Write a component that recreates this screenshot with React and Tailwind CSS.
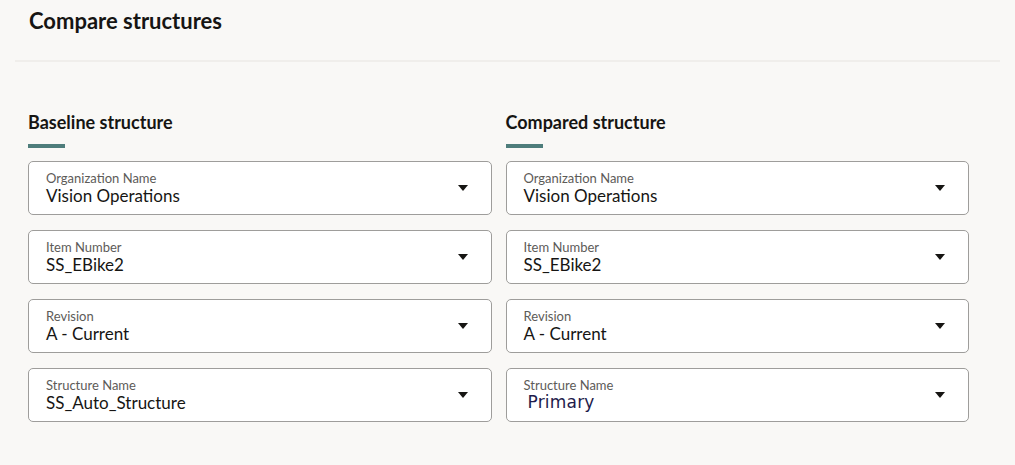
import React from 'react';

const Caret = () => (
    <svg width="10" height="6" viewBox="0 0 10 6" className="shrink-0">
        <path d="M0 0 H10 L5 6 Z" fill="#161513" />
    </svg>
);

const SelectField = ({ label, value, alt }) => (
    <div className="h-[54px] flex items-center justify-between bg-white border border-[#9e9d9b] rounded-[5px] pl-[17px] pr-[23px]">
        <div className="flex flex-col">
            <span className="text-[13px] leading-[15px] text-[#5d5b58]">{label}</span>
            {alt ? (
                <span className="text-[17px] leading-[19px] text-[#1e1b4b] pl-[4px] font-['DejaVu_Sans',sans-serif] tracking-[0.2px]">{value}</span>
            ) : (
                <span className="text-[17px] leading-[19px] text-[#161513]">{value}</span>
            )}
        </div>
        <Caret />
    </div>
);

const Column = ({ title, fields }) => (
    <div className="flex flex-col">
        <h2 className="text-[18px] leading-[22px] font-bold text-[#161513]">{title}</h2>
        <div className="w-[37px] h-[4px] bg-[#4e7d7b] mt-[11px] mb-[13px]" />
        <div className="flex flex-col gap-[15px]">
            {fields.map(f => (
                <SelectField key={f.label} {...f} />
            ))}
        </div>
    </div>
);

const App = () => {
    const baseline = [
        { label: 'Organization Name', value: 'Vision Operations' },
        { label: 'Item Number', value: 'SS_EBike2' },
        { label: 'Revision', value: 'A - Current' },
        { label: 'Structure Name', value: 'SS_Auto_Structure' },
    ];
    const compared = [
        { label: 'Organization Name', value: 'Vision Operations' },
        { label: 'Item Number', value: 'SS_EBike2' },
        { label: 'Revision', value: 'A - Current' },
        { label: 'Structure Name', value: 'Primary', alt: true },
    ];

    return (
        <div className="min-h-screen w-full bg-[#f9f8f6] font-['Lato',sans-serif] text-[#161513]">
            <div className="px-[29px] pt-[7px] h-[60px]">
                <h1 className="text-[22px] leading-[28px] font-bold">Compare structures</h1>
            </div>
            <div className="mx-[15px] h-[2px] bg-[#f0eeeb]" />
            <div className="pl-[28px] pr-[46px] pt-[49px] grid grid-cols-2 gap-[14px]">
                <Column title="Baseline structure" fields={baseline} />
                <Column title="Compared structure" fields={compared} />
            </div>
        </div>
    );
};

export default App;
